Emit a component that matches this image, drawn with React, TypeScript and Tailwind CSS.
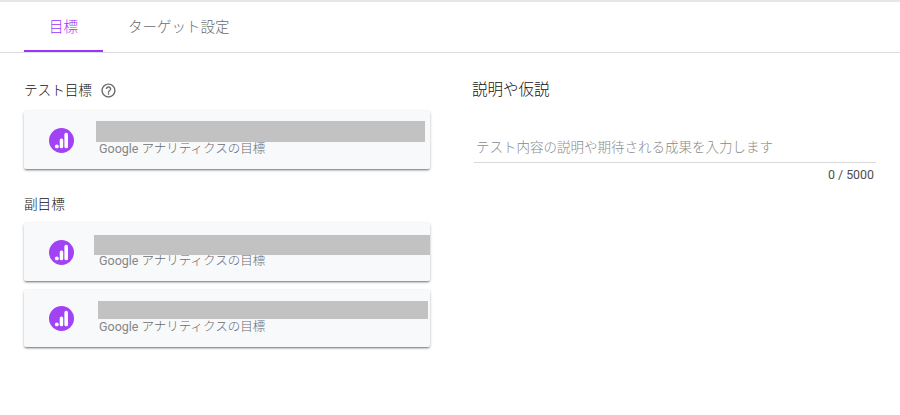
import clsx from "clsx";

const tabs = [
  { label: "目標", active: true },
  { label: "ターゲット設定", active: false },
];

function AnalyticsIcon() {
  return (
    <svg className="ml-[25px] size-[25px] shrink-0" viewBox="0 0 25 25">
      <circle cx="12.5" cy="12.5" r="12.5" fill="#a142f4" />
      <circle cx="7.8" cy="18.4" r="1.9" fill="#fff" />
      <rect x="10.7" y="10.4" width="3.5" height="9.9" rx="1.6" fill="#fff" />
      <rect x="15.4" y="4.8" width="3.6" height="15.5" rx="1.6" fill="#fff" />
    </svg>
  );
}

function HelpIcon() {
  return (
    <svg className="ml-2 size-[17px] shrink-0" viewBox="0 0 24 24" fill="#6b6b6b">
      <path d="M11 18h2v-2h-2v2zm1-16C6.48 2 2 6.48 2 12s4.48 10 10 10 10-4.48 10-10S17.52 2 12 2zm0 18c-4.41 0-8-3.59-8-8s3.59-8 8-8 8 3.59 8 8-3.59 8-8 8zm0-14c-2.21 0-4 1.79-4 4h2c0-1.1.9-2 2-2s2 .9 2 2c0 2-3 1.75-3 5h2c0-2.25 3-2.5 3-5 0-2.21-1.79-4-4-4z" />
    </svg>
  );
}

function GoalCard({ className, maskClassName }: { className: string; maskClassName: string }) {
  return (
    <div
      className={clsx(
        "relative flex w-[406px] rounded-[2px] bg-[#f8f9fb] shadow-[0_2px_2px_-1px_rgba(0,0,0,0.4),0_1px_3px_rgba(0,0,0,0.25)]",
        className,
      )}
    >
      <div className="flex items-center">
        <AnalyticsIcon />
      </div>
      <p className="ml-[25px] self-end pb-[11px] text-[12.5px] leading-[18px] whitespace-nowrap text-[#6b6b6b]">
        <span className="font-normal text-[#868686]">Google </span>
        アナリティクスの目標
      </p>
      {/* redacted goal name */}
      <div className={clsx("absolute bg-[#c2c2c2]", maskClassName)} />
    </div>
  );
}

export default function App() {
  return (
    <div className="h-[415px] w-[900px] overflow-hidden border-t-2 border-[#e6e6e6] bg-white font-[Roboto,'Noto_Sans_CJK_JP',sans-serif] font-light">
      <nav className="flex h-[51px] border-b border-[#dedede] pl-6">
        {tabs.map((tab) => (
          <button
            key={tab.label}
            className={clsx(
              "h-[50px] border-b-2 px-[25px] pt-[3px] text-[14.5px] leading-[45px] whitespace-nowrap",
              tab.active ? "border-[#9b33fa] text-[#9b33fa]" : "border-transparent text-[#6b6b6b]",
            )}
          >
            {tab.label}
          </button>
        ))}
      </nav>

      <main className="flex">
        <section className="w-[448px] shrink-0 pl-6">
          <div className="mt-[27px] flex h-5 items-center text-[13.6px] text-[#111]">
            テスト目標
            <HelpIcon />
          </div>
          <GoalCard className="mt-[11px] h-[58px]" maskClassName="left-[72px] top-[10px] h-[21px] w-[329px]" />

          <h2 className="mt-[25px] h-5 text-[13.6px] leading-5 text-[#111]">副目標</h2>
          <GoalCard className="mt-[9px] h-[58px]" maskClassName="left-[70px] top-[12px] h-[20px] w-[336px]" />
          <GoalCard className="mt-[9px] h-[57px]" maskClassName="left-[74px] top-[11px] h-[18px] w-[330px]" />
        </section>

        <section className="ml-6 w-[404px]">
          <h2 className="mt-[27px] h-5 text-[15.5px] leading-5 text-[#111]">説明や仮説</h2>
          <div className="mt-[37px] ml-[2px] h-[26px] border-b border-[#d9d9d9] pl-[2px] text-[13.5px] leading-5 text-[#8a8a8a]">
            テスト内容の説明や期待される成果を入力します
          </div>
          <p className="mt-[3px] pr-[2px] text-right text-[12.4px] leading-[18px] font-normal text-[#505050]">0 / 5000</p>
        </section>
      </main>
    </div>
  );
}
